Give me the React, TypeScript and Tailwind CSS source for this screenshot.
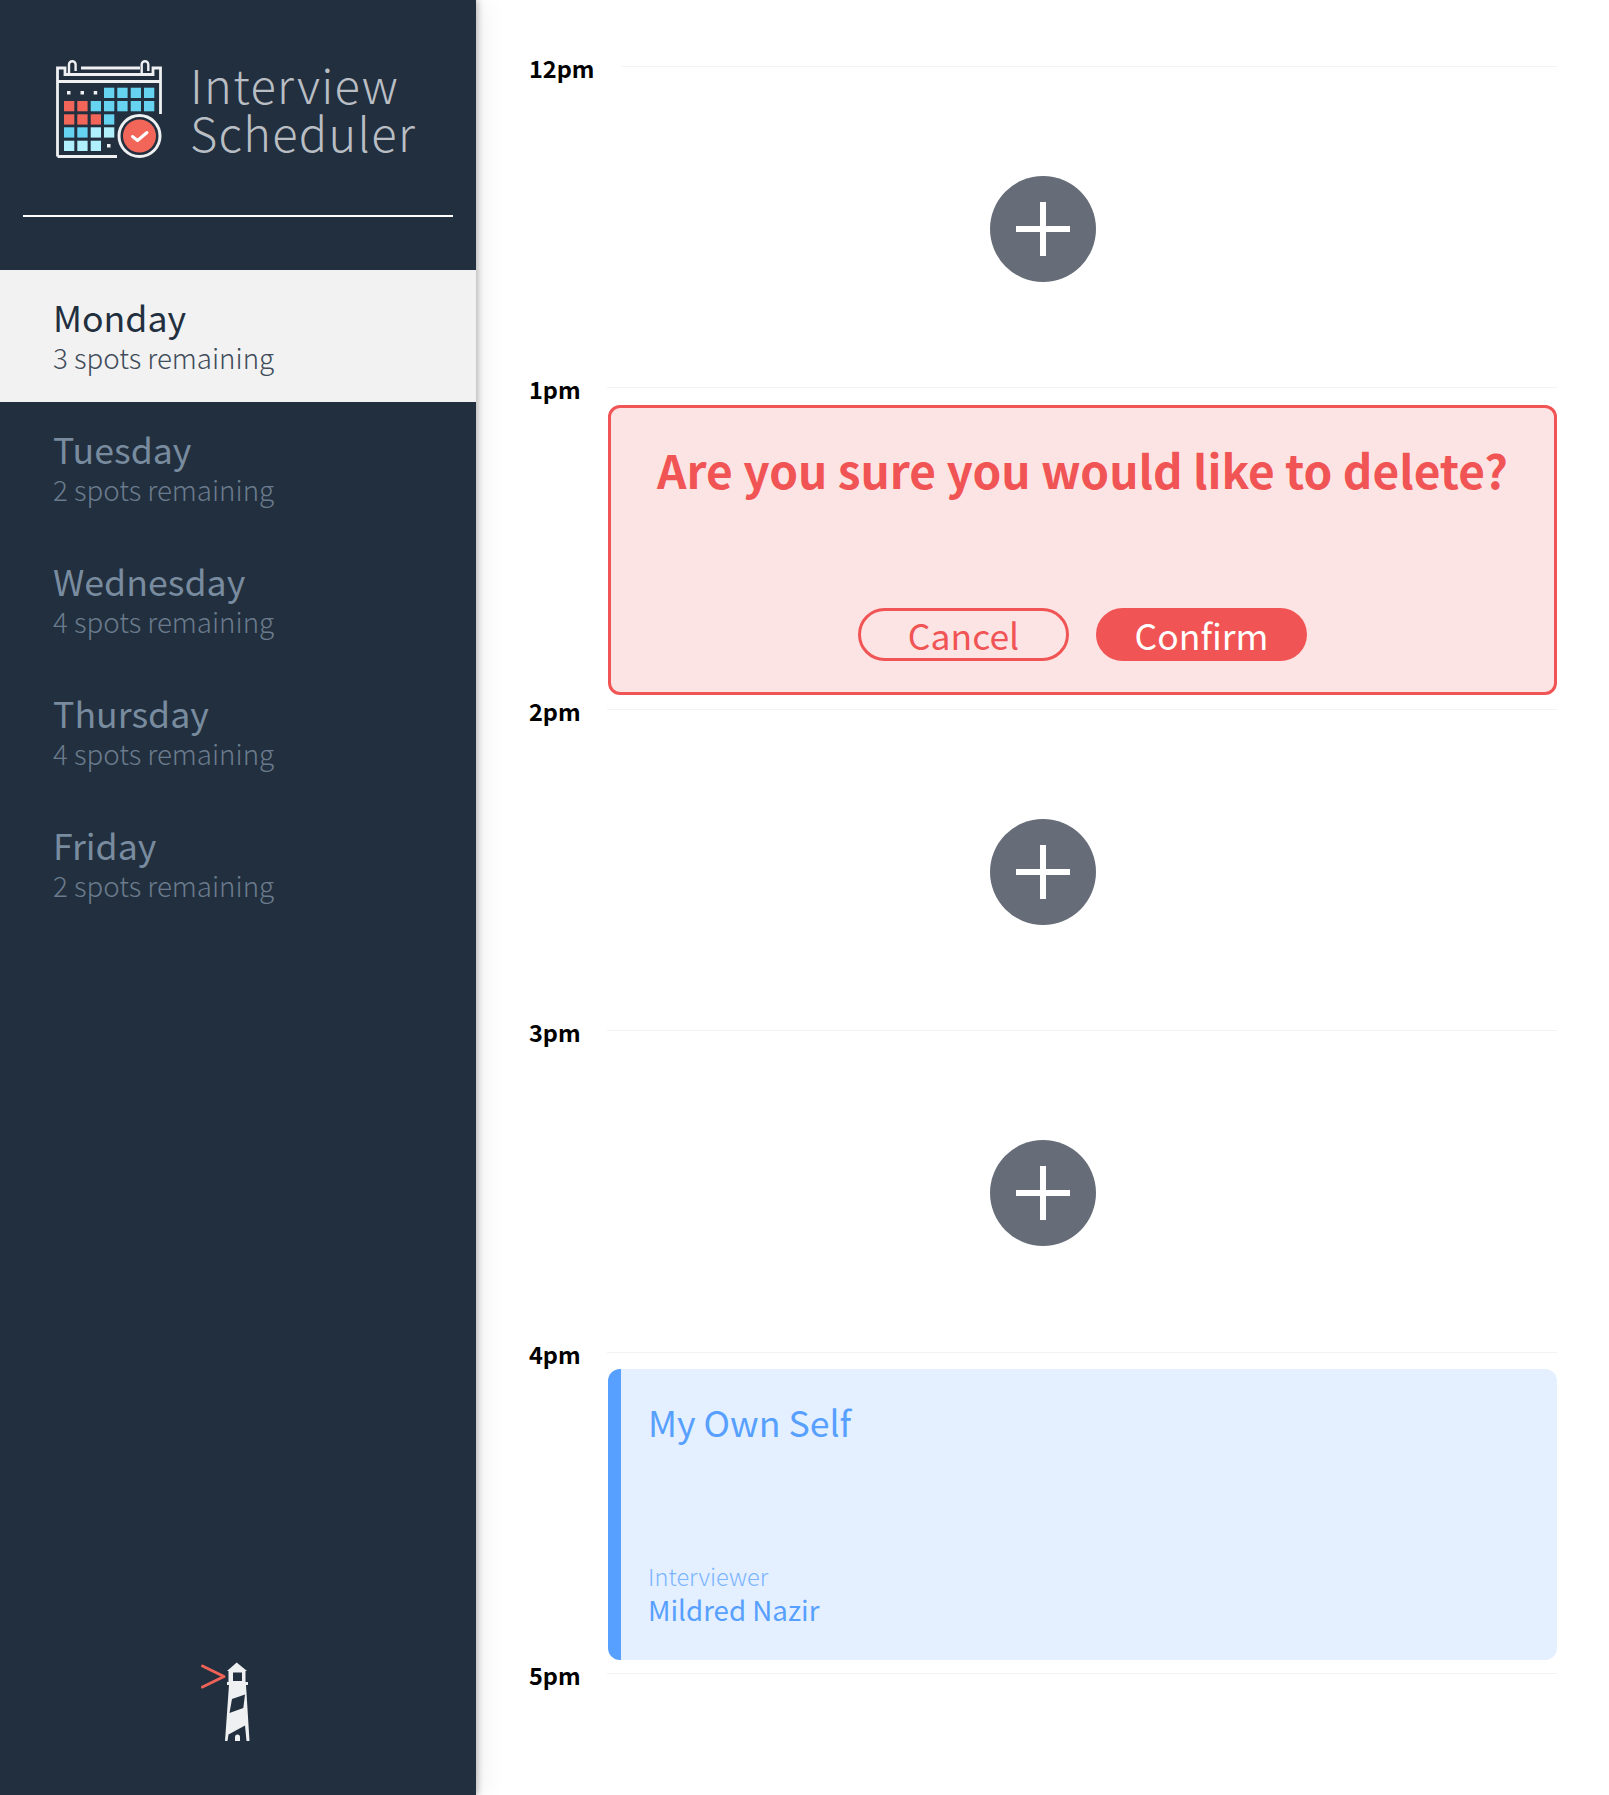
const FONT = "font-['Noto_Sans_CJK_SC','Noto_Sans',sans-serif]";

const days = [
  { name: "Monday", spots: "3 spots remaining", selected: true },
  { name: "Tuesday", spots: "2 spots remaining" },
  { name: "Wednesday", spots: "4 spots remaining" },
  { name: "Thursday", spots: "4 spots remaining" },
  { name: "Friday", spots: "2 spots remaining" },
];

const BLUE = "#66d3f0";
const LIGHT = "#b0f0fd";
const RED = "#f2665a";
const colX = [8, 21.3, 34.7, 48, 61.3, 74.7, 88];
const rowY = [27.7, 41, 54.3, 67.3, 80.7];
const cells: [number, number, string][] = [
  [3, 0, BLUE], [4, 0, BLUE], [5, 0, BLUE], [6, 0, BLUE],
  [0, 1, RED], [1, 1, RED], [2, 1, BLUE], [3, 1, BLUE], [4, 1, BLUE], [5, 1, BLUE], [6, 1, BLUE],
  [0, 2, RED], [1, 2, RED], [2, 2, RED], [3, 2, BLUE],
  [0, 3, BLUE], [1, 3, BLUE], [2, 3, LIGHT], [3, 3, LIGHT],
  [0, 4, LIGHT], [1, 4, LIGHT], [2, 4, LIGHT],
];
const dots = [[11, 31], [24.5, 31], [37.7, 31], [51, 84]];

function CalendarLogo() {
  return (
    <svg width="107" height="100" viewBox="0 0 107 100" fill="none" className="shrink-0">
      <g stroke="#eef0f1" strokeWidth="2.800">
        <path d="M1.500 96.500V8H9V14.500H97V8H104.500V54" />
        <path d="M1.500 21.500H104.500" />
        <path d="M1.500 96.500H61" />
        <path d="M25 8H84" />
        <path d="M13 13V4.500a3.300 3.300 0 0 1 6.600 0V11" strokeWidth="2.400" />
        <path d="M85.700 13V4.500a3.300 3.300 0 0 1 6.600 0V11" strokeWidth="2.400" />
      </g>
      {cells.map(([c, r, fill]) => (
        <rect key={`${c}-${r}`} x={colX[c]} y={rowY[r]} width="10.300" height="10.300" fill={fill} />
      ))}
      {dots.map(([x, y]) => (
        <rect key={`${x}-${y}`} x={x} y={y} width="3.500" height="3.500" fill="#eef0f1" />
      ))}
      <circle cx="83.500" cy="76" r="20.500" fill="#222f3e" stroke="#eef0f1" strokeWidth="3" />
      <circle cx="83.500" cy="76" r="16.500" fill={RED} />
      <path d="M76.500 76.500l5 4 9.500-8" stroke="#fff" strokeWidth="3" strokeLinecap="round" strokeLinejoin="round" />
    </svg>
  );
}

function Lighthouse() {
  return (
    <svg width="90" height="110" viewBox="0 0 90 110" fill="none">
      <path d="M22.500 26L44 36.500L22.500 47" stroke="#ef6257" strokeWidth="3" strokeLinecap="round" strokeLinejoin="round" />
      <path d="M56.700 22.500L67 31H47z" fill="#eef0f1" />
      <path d="M48.500 31H65.500V42H68V45H66L69.500 101H45L49 45H47V42H48.500z" fill="#eef0f1" />
      <rect x="53" y="32.500" width="9" height="8.500" fill="#222f3e" />
      <path d="M52 59L65 54.500L63.300 68L49.500 73z" fill="#222f3e" />
      <path d="M48.500 94.500L65 85.500L66.500 101H60V97a2.500 2.500 0 0 0-5 0V101H47.500z" fill="#222f3e" />
    </svg>
  );
}

function DayItem({ name, spots, selected }: { name: string; spots: string; selected?: boolean }) {
  return (
    <li className={`h-[132px] pl-[53px] pt-[24px] ${selected ? "bg-[#f2f2f2] text-[#222f3e]" : "text-[#788b9f]"}`}>
      <h2 className="text-[35.700px] leading-[46px] font-normal">{name}</h2>
      <h3 className={`text-[27.700px] leading-[35px] font-light ${selected ? "text-[#3f4c5a]" : "text-[#6a7b8d]"}`}>{spots}</h3>
    </li>
  );
}

function AddButton() {
  return (
    <button className="ml-[461px] mt-[93.500px] flex h-[106px] w-[106px] items-center justify-center rounded-full bg-[#666d78]">
      <svg width="54" height="54" viewBox="0 0 54 54">
        <path d="M27 0V54M0 27H54" stroke="#fff" strokeWidth="6" />
      </svg>
    </button>
  );
}

function DeleteConfirm() {
  return (
    <div className="ml-[79px] mt-[1.500px] flex h-[290px] flex-col items-center rounded-[12px] border-[3px] border-[#f15454] bg-[#fde4e4] pt-[29px] text-[#f15454]">
      <h1 className="text-[46px] leading-[64px] font-bold">Are you sure you would like to delete?</h1>
      <div className="mt-[107px] flex gap-[27px]">
        <button className="h-[53px] w-[211px] rounded-full border-[3px] border-[#f15454] text-[35.500px] leading-[44px] font-normal">Cancel</button>
        <button className="h-[53px] w-[211px] rounded-full bg-[#f15454] text-[35.500px] leading-[44px] font-normal text-white">Confirm</button>
      </div>
    </div>
  );
}

function Booked() {
  return (
    <div className="ml-[79px] mt-[1px] flex h-[291px] flex-col rounded-[12px] border-l-[13px] border-[#57a0ff] bg-[#e4f0ff] pl-[27px] text-[#57a0ff]">
      <h2 className="mt-[28.500px] text-[35.700px] leading-[48px] font-normal">My Own Self</h2>
      <div className="mt-auto mb-[33px]">
        <p className="text-[23.600px] leading-[30px] font-light text-[#7cb5ff]">Interviewer</p>
        <p className="text-[27.700px] leading-[36px] font-normal">Mildred Nazir</p>
      </div>
    </div>
  );
}

function Slot({ time, children }: { time: string; children?: React.ReactNode }) {
  return (
    <article className="h-[321.500px]">
      <header className="flex h-[32px] items-center gap-[26px]">
        <span className="pt-[3px] text-[23.500px] leading-[32px] font-bold text-black">{time}</span>
        <div className="h-[1px] flex-1 bg-[#f3f3f3]" />
      </header>
      {children}
    </article>
  );
}

export default function App() {
  return (
    <div className={`flex h-[1795px] w-full overflow-hidden bg-white ${FONT}`}>
      <nav className="relative flex w-[476px] shrink-0 flex-col bg-[#222f3e] shadow-[2px_0_6px_rgba(0,0,0,0.25),8px_0_24px_rgba(0,0,0,0.06)]">
        <div className="mx-[23px] h-[217px] border-b-2 border-white">
          <div className="flex items-start gap-[27px] pl-[33px] pt-[60px]">
            <CalendarLogo />
            <div className="text-[47px] leading-[47.500px] font-light tracking-[1.300px] text-[#b9bec4]">
              Interview
              <br />
              Scheduler
            </div>
          </div>
        </div>
        <ul className="mt-[53px]">
          {days.map((d) => (
            <DayItem key={d.name} {...d} />
          ))}
        </ul>
        <div className="mt-auto mb-[45px] pl-[180px]">
          <Lighthouse />
        </div>
      </nav>
      <main className="flex-1 pl-[53px] pr-[52px] pt-[50px]">
        <Slot time="12pm"><AddButton /></Slot>
        <Slot time="1pm"><DeleteConfirm /></Slot>
        <Slot time="2pm"><AddButton /></Slot>
        <Slot time="3pm"><AddButton /></Slot>
        <Slot time="4pm"><Booked /></Slot>
        <Slot time="5pm" />
      </main>
    </div>
  );
}
